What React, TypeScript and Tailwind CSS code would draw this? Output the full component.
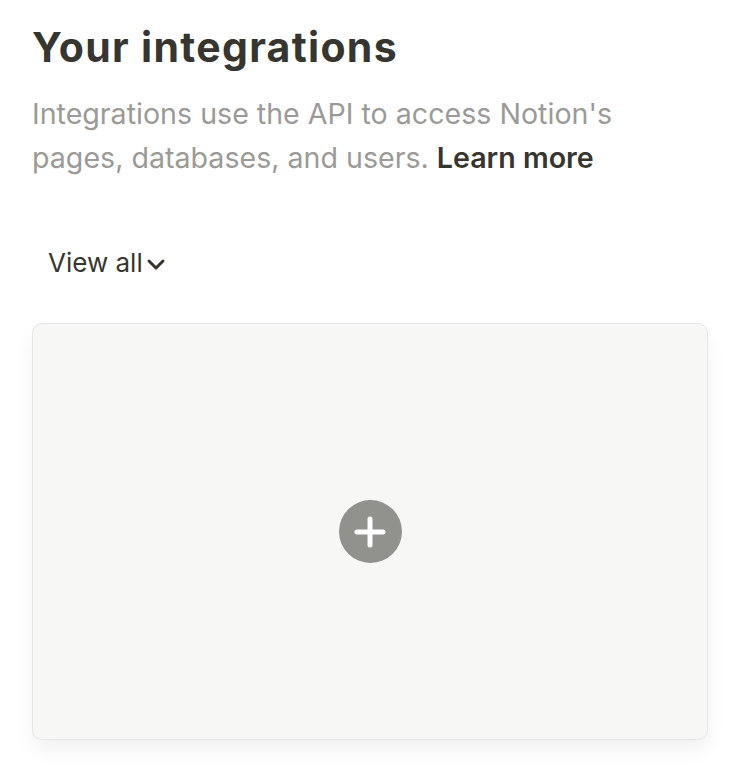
export default function App() {
  return (
    <main
      className="min-h-screen bg-white pl-[32px] pr-[22px] pt-[20px]"
      style={{ fontFamily: "Inter, 'Noto Sans', sans-serif" }}
    >
      {/* Header */}
      <h1 className="text-[41px] font-bold leading-[54px] tracking-[1.3px] text-[#37352f]">
        Your integrations
      </h1>
      <p className="mt-[18px] max-w-[620px] text-[28.6px] leading-[44px] text-[#9b9a97]">
        Integrations use the API to access Notion's pages, databases, and users.{" "}
        <span className="font-semibold text-[#37352f]">Learn more</span>
      </p>

      {/* Filter */}
      <button className="mt-[63px] ml-[16px] flex items-center gap-[3px] text-[26px] leading-[40px] text-[#37352f]">
        View all
        <svg width="20" height="20" viewBox="0 0 20 20" className="mt-[1px]">
          <path
            d="M3 7 L10 14 L17 7"
            fill="none"
            stroke="#37352f"
            strokeWidth="3"
            strokeLinecap="round"
            strokeLinejoin="round"
          />
        </svg>
      </button>

      {/* Empty card */}
      <div className="mt-[40px] flex h-[417px] items-center justify-center rounded-[10px] border border-[#e6e6e4] bg-[#f7f7f5] shadow-[0_10px_20px_rgba(15,15,15,0.06)]">
        <div className="flex h-[63px] w-[63px] items-center justify-center rounded-full bg-[#91918e]">
          <svg width="32" height="32" viewBox="0 0 32 32">
            <path
              d="M16 3 V29 M3 16 H29"
              stroke="white"
              strokeWidth="5"
              strokeLinecap="round"
            />
          </svg>
        </div>
      </div>
    </main>
  );
}
